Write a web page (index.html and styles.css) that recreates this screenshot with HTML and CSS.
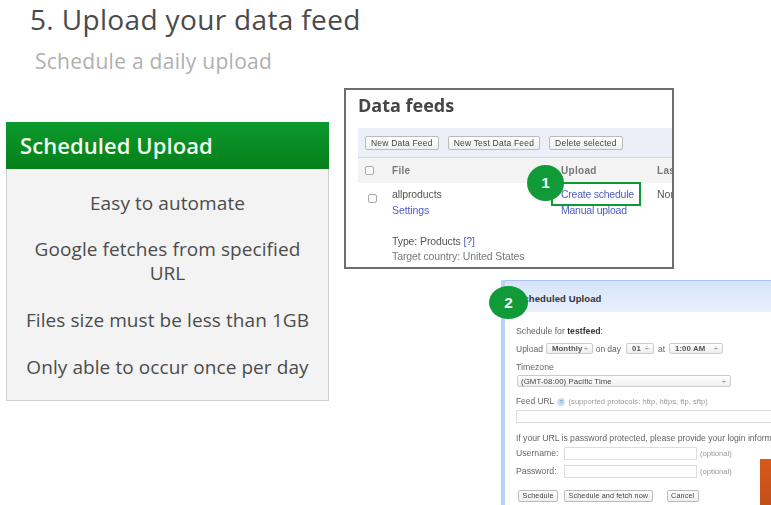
FILE: index.html
```html
<!DOCTYPE html>
<html lang="en">
<head>
<meta charset="utf-8">
<title>Upload your data feed</title>
<link rel="stylesheet" href="styles.css">
</head>
<body>
<main class="slide">
  <h1 class="title">5. Upload your data feed</h1>
  <p class="subtitle">Schedule a daily upload</p>

  <section class="card">
    <h2 class="card-head">Scheduled Upload</h2>
    <div class="card-body">
      <p>Easy to automate</p>
      <p>Google fetches from specified URL</p>
      <p>Files size must be less than 1GB</p>
      <p>Only able to occur once per day</p>
    </div>
  </section>

  <section class="shot feeds">
    <div class="shot-inner">
      <h3 class="feeds-title">Data feeds</h3>
      <div class="toolbar">
        <span class="btn">New Data Feed</span>
        <span class="btn">New Test Data Feed</span>
        <span class="btn">Delete selected</span>
      </div>
      <div class="row head">
        <span class="c-check"><i class="box"></i></span>
        <span class="c-file">File</span>
        <span class="c-upload">Upload</span>
        <span class="c-last">Las</span>
      </div>
      <div class="row body">
        <span class="c-check"><i class="box"></i></span>
        <div class="c-file">
          <div class="line">allproducts</div>
          <div class="line link">Settings</div>
          <div class="line type">Type: Products <span class="link">[?]</span></div>
          <div class="line muted">Target country: United States</div>
        </div>
        <div class="c-upload">
          <div class="line link">Create schedule</div>
          <div class="line link">Manual upload</div>
        </div>
        <span class="c-last">Nor</span>
      </div>
    </div>
  </section>
  <div class="highlight"></div>
  <div class="badge badge-1">1</div>

  <section class="shot2">
    <div class="dlg-head">Scheduled Upload</div>
    <div class="dlg-body">
      <div class="f f-for">Schedule for <b>testfeed</b>:</div>
      <div class="f f-upload">Upload <span class="sel s-month">Monthly<em>÷</em></span> on day <span class="sel s-day">01<em>÷</em></span> at <span class="sel s-time">1:00 AM<em>÷</em></span></div>
      <div class="f f-tz">Timezone</div>
      <div class="sel s-zone">(GMT-08:00) Pacific Time<em>÷</em></div>
      <div class="f f-url">Feed URL <i class="help">?</i> <small>(supported protocols: http, https, ftp, sftp)</small></div>
      <div class="input wide"></div>
      <div class="f f-if">If your URL is password protected, please provide your login information</div>
      <div class="cred"><span class="lab">Username:</span><span class="input"></span><small>(optional)</small></div>
      <div class="cred"><span class="lab">Password:</span><span class="input"></span><small>(optional)</small></div>
      <div class="actions">
        <span class="btn">Schedule</span>
        <span class="btn">Schedule and fetch now</span>
        <span class="btn cancel">Cancel</span>
      </div>
    </div>
    <div class="orange"></div>
  </section>
  <div class="badge badge-2">2</div>
</main>
</body>
</html>
```
FILE: styles.css
```css
* { box-sizing: border-box; }
html, body { margin: 0; padding: 0; background: #fff; }
body { width: 771px; height: 505px; overflow: hidden; font-family: "Open Sans", sans-serif; }
.slide { position: relative; width: 771px; height: 505px; overflow: hidden; padding: 0 0 0 6px; }

.title { margin: 0 0 0 24px; font-size: 28px; line-height: 38px; font-weight: 400; color: #4a4a4a; letter-spacing: 0.35px; }
.subtitle { margin: 8px 0 0 29px; font-size: 21px; line-height: 30px; font-weight: 400; color: #b0b0b0; letter-spacing: 0.27px; }

.card { margin-top: 46px; width: 323px; height: 279px; background: #f3f3f3; border: 1px solid #cfcfcf; border-top: 0; }
.card-head { margin: 0 -1px; height: 47px; padding-left: 14px; font-size: 22px; line-height: 47px; font-weight: 600; color: #f2f8ee; background: linear-gradient(#0b9a2c, #067f1b); letter-spacing: 0.08px; }
.card-body { padding: 22.6px 12px 0; text-align: center; font-size: 19px; line-height: 23.5px; color: #4c4c4c; letter-spacing: 0.08px; }
.card-body p { margin: 0 0 23.4px; }

.shot { position: absolute; left: 344px; top: 88px; width: 330px; height: 181px; border: 2px solid #6e6e6e; background: #fff; overflow: hidden; font-family: "Liberation Sans", sans-serif; font-size: 10.5px; color: #555; }
.shot-inner { filter: blur(0.35px); padding-top: 3px; }
.feeds-title { margin: 0 0 0 12px; font-family: "Open Sans", sans-serif; font-size: 18px; line-height: 24px; font-weight: 700; color: #454545; }
.toolbar { margin: 11px 0 0 12px; height: 30px; background: #eceef8; border-bottom: 1px solid #d5d9ee; display: flex; align-items: center; gap: 9px; padding: 0 0 0 7px; }
.btn { display: inline-block; height: 14px; padding: 0 5px; line-height: 13px; font-size: 8.5px; letter-spacing: 0.2px; color: #444; background: linear-gradient(#fff, #efefef); border: 1px solid #bbb; border-radius: 2px; white-space: nowrap; }
.row { margin-left: 12px; display: flex; position: relative; }
.row.head { height: 25px; background: #f3f3f3; align-items: center; font-weight: 700; color: #777; letter-spacing: 0.3px; font-size: 10px; }
.c-check { flex: none; width: 34px; padding-left: 7px; display: block; }
.row.body .c-check { padding-left: 10px; padding-top: 7px; }
.c-file { flex: none; width: 169px; }
.c-upload { flex: none; width: 96px; }
.c-last { flex: none; width: 20px; white-space: nowrap; }
.box { display: block; width: 9px; height: 9px; border: 1px solid #aaa; border-radius: 2px; background: #fafafa; }
.line { height: 15.5px; line-height: 15.5px; white-space: nowrap; letter-spacing: -0.1px; }
.c-upload .line { letter-spacing: -0.24px; }
.row.body { padding-top: 4px; }
.row.body .c-last { line-height: 15.5px; }
.link { color: #4a5fc0; }
.type { margin-top: 15.5px; }
.muted { color: #777; }

.highlight { position: absolute; left: 551px; top: 182px; width: 90px; height: 24px; border: 2px solid #0c9a35; }
.badge { position: absolute; border-radius: 50%; background: #109a38; color: #eef7ee; font-family: "Liberation Sans", sans-serif; font-weight: 700; font-size: 15.5px; text-align: center; }
.badge-1 { left: 527px; top: 165px; width: 37px; height: 36px; line-height: 36px; }
.badge-2 { left: 489px; top: 286px; width: 39px; height: 33px; line-height: 33px; }

.shot2 { position: absolute; left: 501px; top: 280px; width: 270px; height: 225px; background: #fff; border-left: 4px solid #bcd2f5; overflow: hidden; font-family: "Liberation Sans", sans-serif; color: #666; font-size: 8.7px; }
.dlg-head { height: 32px; padding-left: 12px; background: linear-gradient(#d6e4fa, #e8f0fc); border-top: 1px solid #a9c4ee; font-weight: 700; font-size: 9.5px; line-height: 35px; color: #333; letter-spacing: 0.1px; }
.dlg-body { padding: 13px 0 0 11px; filter: blur(0.3px); white-space: nowrap; }
.f { line-height: 12px; }
.f b { color: #333; }
.f-upload { margin-top: 6px; height: 13px; line-height: 13px; font-size: 8.5px; word-spacing: -0.4px; }
.sel { display: inline-block; position: relative; height: 11px; line-height: 10px; padding-left: 5px; margin: 0 1px; font-size: 7.8px; font-weight: 700; color: #555; background: linear-gradient(#fff, #eee); border: 1px solid #ccc; border-radius: 2px; letter-spacing: 0.1px; vertical-align: 1px; word-spacing: 0; }
.sel em { position: absolute; right: 4px; top: 0; font-style: normal; font-weight: 400; font-size: 7px; }
.s-month { width: 47px; }
.s-day { width: 28px; margin: 0 2px 0 3px; }
.s-time { width: 54px; margin-left: 2px; }
.s-zone { display: block; margin: 2px 0 0 1px; padding-left: 3px; width: 214px; font-weight: 400; color: #444; height: 12px; line-height: 11px; }
.f-tz { margin-top: 5px; }
.f-url { margin-top: 8px; font-size: 8.4px; }
.help { display: inline-block; width: 8px; height: 8px; border-radius: 50%; background: #cfe0f5; color: #5a85c0; font-size: 6px; font-style: normal; line-height: 8px; text-align: center; margin: 0 1px; }
small { font-size: 7.6px; color: #999; letter-spacing: 0.02px; }
.input { display: block; height: 13px; background: #fff; border: 1px solid #ddd; }
.wide { margin-top: 2px; width: 300px; }
.f-if { margin-top: 9px; letter-spacing: -0.04px; }
.cred { display: flex; align-items: center; height: 12px; margin-top: 5px; }
.cred + .cred { margin-top: 6px; }
.cred .lab { width: 48px; }
.cred .input { width: 133px; margin-right: 3px; height: 13px; flex: none; }
.f-if + .cred { margin-top: 3px; }
.actions { display: flex; gap: 6px; margin: 13px 0 0 2px; }
.shot2 .btn { font-size: 7.2px; height: 12px; line-height: 10px; padding: 0 3.5px; letter-spacing: 0.13px; }
.shot2 .cancel { margin-left: 8px; }
.orange { position: absolute; left: 255px; top: 179px; width: 11px; height: 46px; background: linear-gradient(#d9591a, #c2501a); }
```
